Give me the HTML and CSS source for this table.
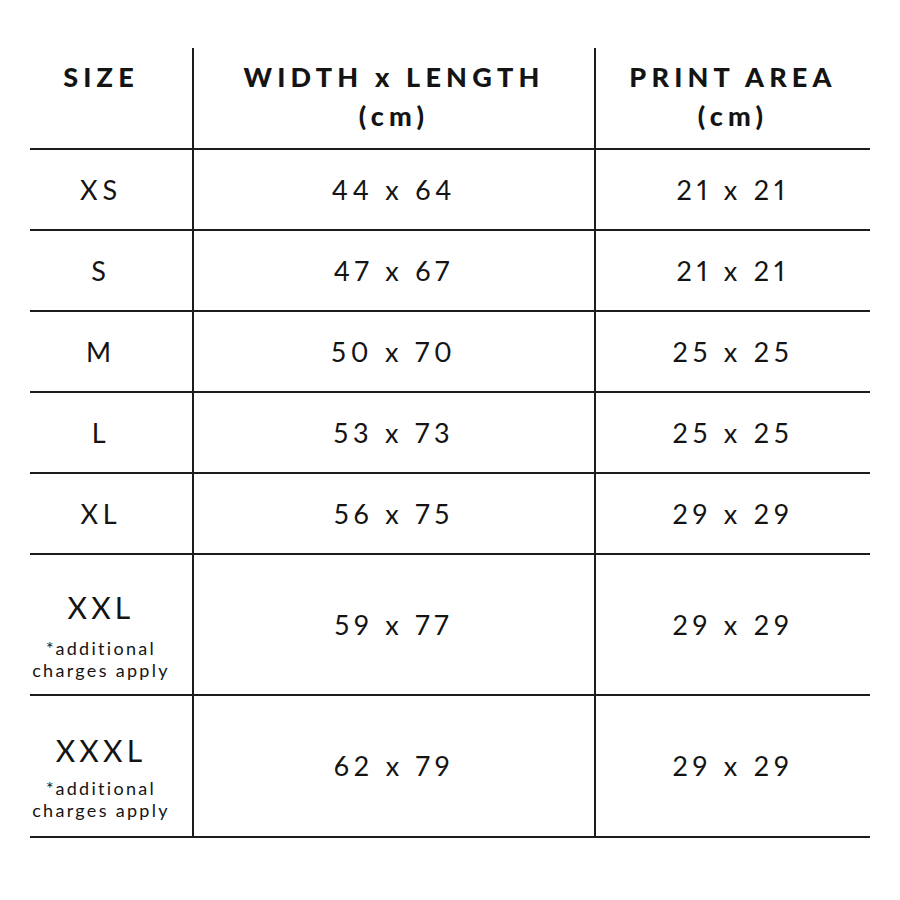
FILE: index.html
```html
<!DOCTYPE html>
<html>
<head>
<meta charset="utf-8">
<link rel="stylesheet" href="styles.css">
</head>
<body>
<div class="chart">
  <div class="cell head c1"><div>SIZE</div></div>
  <div class="cell head c2"><div>WIDTH x LENGTH</div><div>(cm)</div></div>
  <div class="cell head c3"><div>PRINT AREA</div><div>(cm)</div></div>

  <div class="cell c1"><span class="size">XS</span></div>
  <div class="cell c2"><span class="val">44 x 64</span></div>
  <div class="cell c3"><span class="val">21 x 21</span></div>

  <div class="cell c1"><span class="size">S</span></div>
  <div class="cell c2"><span class="val">47 x 67</span></div>
  <div class="cell c3"><span class="val">21 x 21</span></div>

  <div class="cell c1"><span class="size">M</span></div>
  <div class="cell c2"><span class="val">50 x 70</span></div>
  <div class="cell c3"><span class="val">25 x 25</span></div>

  <div class="cell c1"><span class="size">L</span></div>
  <div class="cell c2"><span class="val">53 x 73</span></div>
  <div class="cell c3"><span class="val">25 x 25</span></div>

  <div class="cell c1"><span class="size">XL</span></div>
  <div class="cell c2"><span class="val">56 x 75</span></div>
  <div class="cell c3"><span class="val">29 x 29</span></div>

  <div class="cell c1 tall"><span class="size big">XXL</span><span class="note">*additional<br>charges apply</span></div>
  <div class="cell c2"><span class="val">59 x 77</span></div>
  <div class="cell c3"><span class="val">29 x 29</span></div>

  <div class="cell c1 tall tall2"><span class="size big">XXXL</span><span class="note">*additional<br>charges apply</span></div>
  <div class="cell c2"><span class="val">62 x 79</span></div>
  <div class="cell c3"><span class="val">29 x 29</span></div>
</div>
</body>
</html>
```

FILE: styles.css
```css
html, body {
  margin: 0;
  padding: 0;
  background: #ffffff;
}
body {
  font-family: "Lato", "Noto Sans", sans-serif;
  color: #141414;
  font-variant-numeric: proportional-nums;
}
.chart {
  margin: 48px 0 0 30px;
  width: 840px;
  display: grid;
  grid-template-columns: 164px 402px 274px;
  grid-template-rows: 102px 81px 81px 81px 81px 81px 141px 142px;
}
.cell {
  box-sizing: border-box;
  border-bottom: 2px solid #1c1c1c;
  display: flex;
  flex-direction: column;
  align-items: center;
  justify-content: center;
  text-align: center;
}
.c1, .c2 {
  border-right: 2px solid #1c1c1c;
}
.c1 {
  padding-right: 20px;
}
.head {
  justify-content: flex-start;
  padding-top: 9px;
  font-weight: 900;
  font-size: 27px;
  letter-spacing: 5.2px;
  line-height: 39px;
}
.val, .size {
  font-size: 27px;
  letter-spacing: 4.8px;
  line-height: 32px;
}
.size.big {
  font-size: 30px;
  line-height: 36px;
  margin-bottom: 12px;
  letter-spacing: 4.2px;
}
.note {
  font-size: 18px;
  letter-spacing: 2.3px;
  line-height: 22px;
}
.tall {
  justify-content: flex-start;
  padding-top: 34px;
}
.tall2 {
  padding-top: 36px;
}
.tall2 .size.big {
  margin-bottom: 9px;
}
```
